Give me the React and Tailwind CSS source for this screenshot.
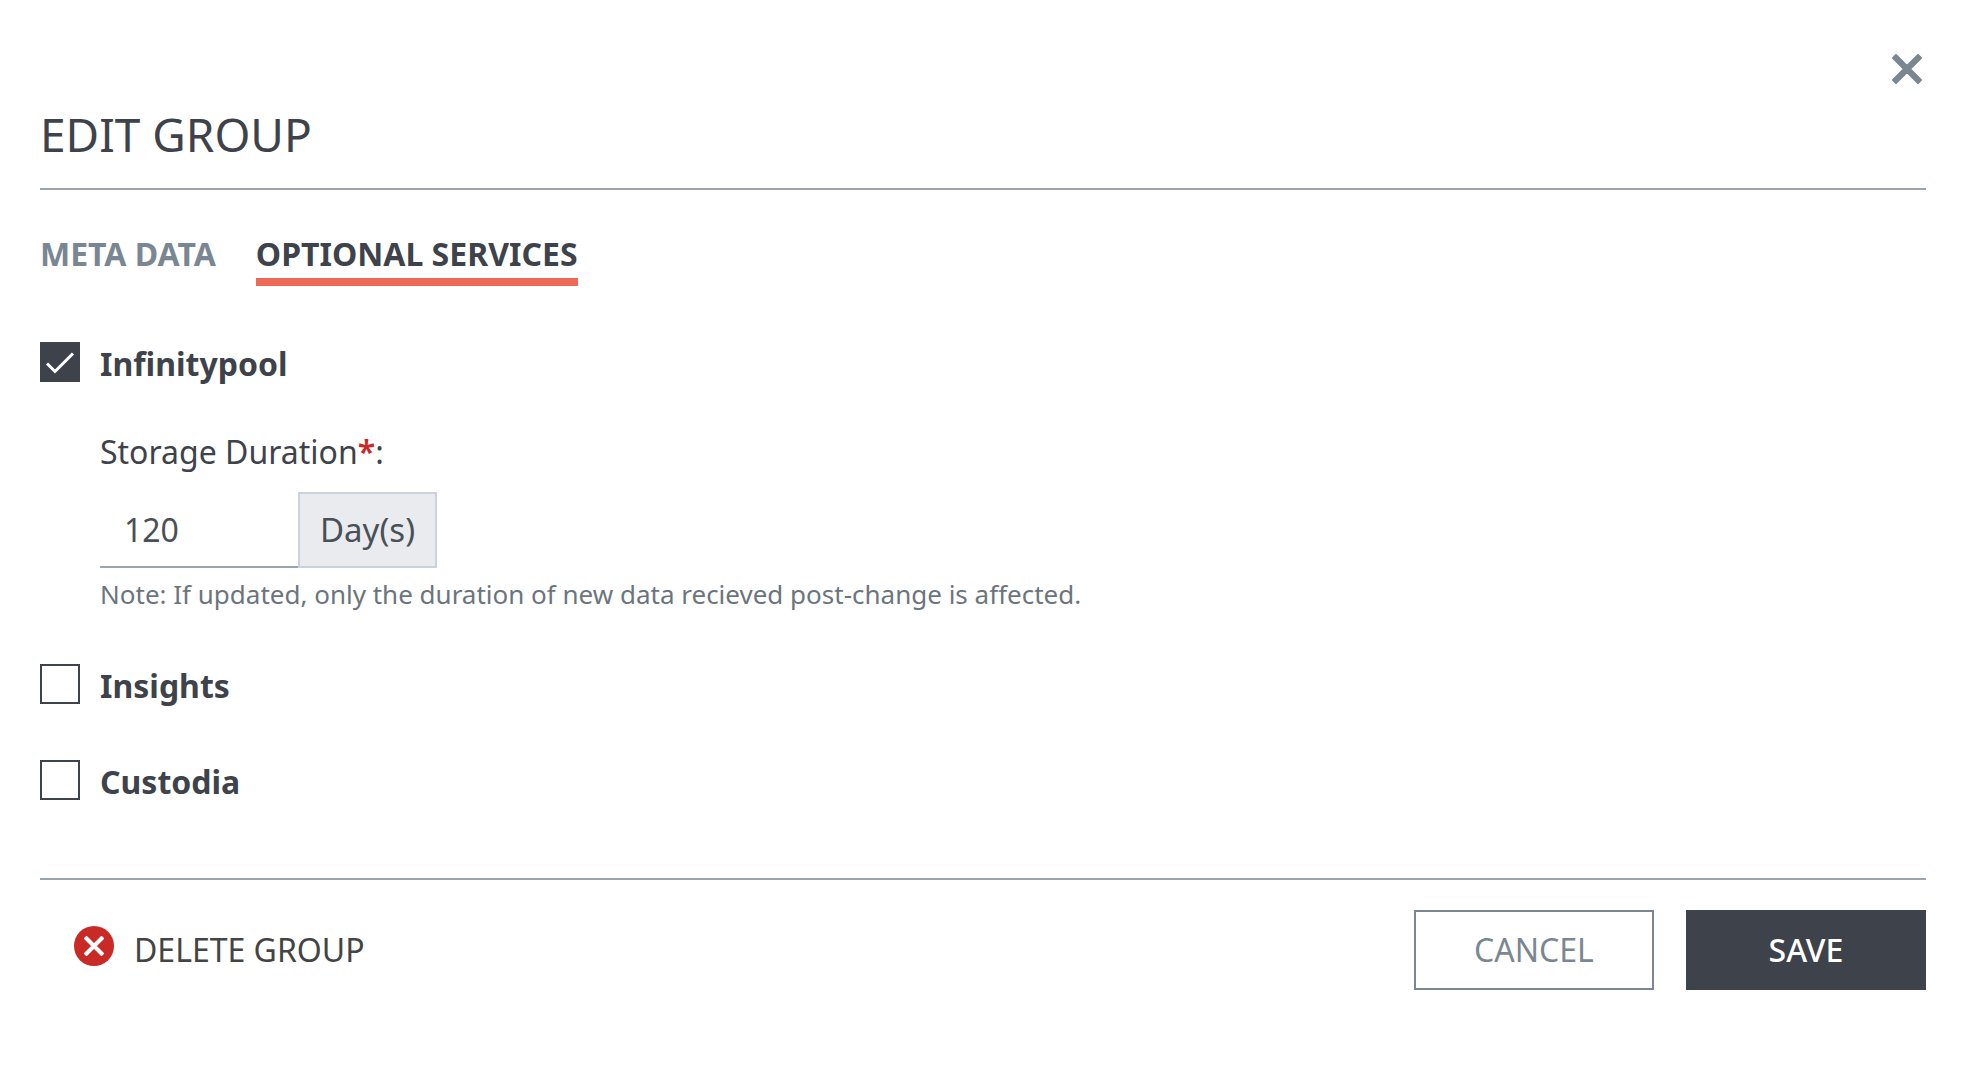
import React, { useState } from 'react';

const services = [
  { id: 'infinitypool', name: 'Infinitypool' },
  { id: 'insights', name: 'Insights' },
  { id: 'custodia', name: 'Custodia' },
];

const tabs = ['META DATA', 'OPTIONAL SERVICES'];

function ServiceCheckbox({ id, name, checked, onChange }) {
  return (
    <div className="flex items-start gap-5">
      <span className="relative w-10 h-10 flex-shrink-0">
        <input
          id={id}
          type="checkbox"
          checked={checked}
          onChange={onChange}
          className="block w-10 h-10 appearance-none border-2 border-[#3e424b] bg-white checked:bg-[#3e424b]"
        />
        {checked && (
          <svg viewBox="0 0 40 40" className="absolute inset-0 w-10 h-10 pointer-events-none" fill="none" stroke="#fff" strokeWidth="3">
            <path d="M7 21.5 L15 29.5 L33 11.5" />
          </svg>
        )}
      </span>
      <label htmlFor={id} className="text-[32px] leading-[44px] font-bold">
        {name}
      </label>
    </div>
  );
}

export default function App() {
  const [activeTab, setActiveTab] = useState('OPTIONAL SERVICES');
  const [enabled, setEnabled] = useState({ infinitypool: true });
  const [duration, setDuration] = useState('120');

  const toggle = (id) => setEnabled({ ...enabled, [id]: !enabled[id] });

  return (
    <div className="min-h-screen bg-white px-10 pt-[50px] pb-10 font-['Noto_Sans',sans-serif] text-[#3e424b]">
      {/* Header */}
      <header className="border-b-2 border-[#9aa5af] pb-5">
        <div className="flex justify-end">
          <button type="button" aria-label="Close" className="p-1">
            <svg viewBox="0 0 30 30" className="w-[30px] h-[30px]" fill="#7a8793" stroke="#7a8793" strokeWidth="2" strokeLinejoin="round">
              <path d="M4 1 L15 12 L26 1 L29 4 L18 15 L29 26 L26 29 L15 18 L4 29 L1 26 L12 15 L1 4 Z" />
            </svg>
          </button>
        </div>
        <h1 className="mt-3 text-[46px] leading-[68px]">EDIT GROUP</h1>
      </header>

      {/* Tabs */}
      <nav className="mt-11 flex gap-10">
        {tabs.map((tab) => (
          <button
            key={tab}
            type="button"
            onClick={() => setActiveTab(tab)}
            className={`pb-1 border-b-8 text-[32px] leading-10 font-bold ${
              activeTab === tab ? 'border-[#ef6a56] text-[#3e424b]' : 'border-transparent text-[#7a8793]'
            }`}
          >
            {tab}
          </button>
        ))}
      </nav>

      {/* Services */}
      <div className="mt-14 flex flex-col gap-[52px]">
        {services.map((service) => (
          <div key={service.id}>
            <ServiceCheckbox
              id={service.id}
              name={service.name}
              checked={!!enabled[service.id]}
              onChange={() => toggle(service.id)}
            />

            {service.id === 'infinitypool' && enabled.infinitypool && (
              <div className="mt-11 pl-[60px]">
                <label htmlFor="duration" className="block text-[32px] leading-[44px]">
                  Storage Duration<span className="font-semibold text-[#c92a26]">*</span>:
                </label>
                <div className="mt-[18px] flex h-[76px] text-[32px] text-[#495057]">
                  <input
                    id="duration"
                    type="text"
                    value={duration}
                    onChange={(e) => setDuration(e.target.value)}
                    className="w-[200px] px-6 pt-0.5 border-b-2 border-[#9aa5af] outline-none"
                  />
                  <span className="-ml-0.5 flex items-center px-5 border-2 border-[#ccd2da] bg-[#e9ebef] text-[33px]">
                    Day(s)
                  </span>
                </div>
                <p className="mt-2 text-[26px] leading-9 text-[#6c757d]">
                  Note: If updated, only the duration of new data recieved post-change is affected.
                </p>
              </div>
            )}
          </div>
        ))}
      </div>

      {/* Footer */}
      <footer className="mt-[74px] pt-[30px] border-t-2 border-[#9aa5af] flex items-center justify-between text-[32px]">
        <button type="button" className="ml-[34px] flex items-start gap-5 leading-[48px] text-[#444444]">
          <svg viewBox="0 0 40 40" className="w-10 h-10">
            <circle cx="20" cy="20" r="20" fill="#c92a26" />
            <path
              d="M12.5 11 L20 18.5 L27.5 11 L29 12.5 L21.5 20 L29 27.5 L27.5 29 L20 21.5 L12.5 29 L11 27.5 L18.5 20 L11 12.5 Z"
              fill="#fff"
              stroke="#fff"
              strokeWidth="2"
              strokeLinejoin="round"
            />
          </svg>
          DELETE GROUP
        </button>
        <div className="flex gap-8">
          <button type="button" className="w-60 h-20 border-2 border-[#7a8793] text-[#7a8793]">
            CANCEL
          </button>
          <button type="button" className="w-60 h-20 bg-[#3e424b] text-white font-medium">
            SAVE
          </button>
        </div>
      </footer>
    </div>
  );
}
